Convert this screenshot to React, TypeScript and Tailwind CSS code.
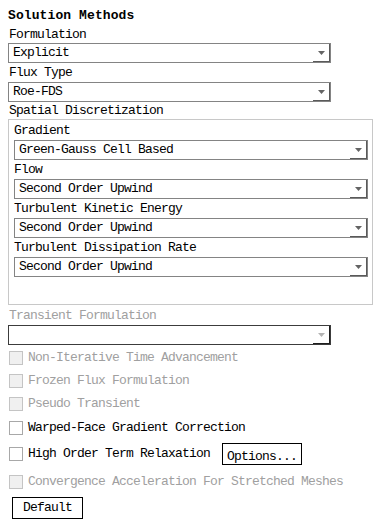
import React from 'react';

const mono = "font-['Liberation_Mono','DejaVu_Sans_Mono',monospace]";

interface DropdownProps {
  value?: string;
  width: string;
  disabled?: boolean;
}

const Dropdown = ({ value = '', width, disabled }: DropdownProps) => (
  <div
    className={`flex h-[20px] ${width} bg-white border ${
      disabled ? 'border-[#3c3c3c]' : 'border-[#848484]'
    }`}
  >
    <div className="flex-1 pl-[4px] leading-[18px] text-black whitespace-nowrap overflow-hidden">
      {value}
    </div>
    <div
      className={`w-[17px] flex items-center justify-center border-r border-b ${
        disabled ? 'border-[#1e1e1e]' : 'border-[#5a5a5a]'
      }`}
    >
      <svg width="7" height="4" viewBox="0 0 7 4">
        <path d="M0 0h7L3.5 4z" fill={disabled ? '#b4b4b4' : '#646464'} />
      </svg>
    </div>
  </div>
);

interface CheckProps {
  label: string;
  disabled?: boolean;
  className?: string;
  children?: React.ReactNode;
}

const Check = ({ label, disabled, className = '', children }: CheckProps) => (
  <div className={`flex items-center ${className}`}>
    <div
      className={`ml-[1px] w-[14px] h-[14px] border ${
        disabled ? 'border-[#c4c4c4] bg-[#f0f0f0]' : 'border-[#a8a8a8] bg-white'
      }`}
    />
    <span
      className={`ml-[5px] leading-[14px] whitespace-nowrap ${
        disabled ? 'text-[#a0a0a0]' : 'text-black'
      }`}
    >
      {label}
    </span>
    {children}
  </div>
);

const spatial = [
  { name: 'Gradient', value: 'Green-Gauss Cell Based' },
  { name: 'Flow', value: 'Second Order Upwind' },
  { name: 'Turbulent Kinetic Energy', value: 'Second Order Upwind' },
  { name: 'Turbulent Dissipation Rate', value: 'Second Order Upwind' },
];

export default function App() {
  return (
    <div
      className={`w-[382px] h-[526px] bg-white px-2 pt-[7px] text-[13px] tracking-[-0.8px] text-black ${mono}`}
    >
      <div className="h-[18px] leading-[18px] font-bold tracking-[0.1px]">Solution Methods</div>
      <div className="h-[18px] leading-[20px] pl-[1px]">Formulation</div>
      <Dropdown value="Explicit" width="w-[323px]" />
      <div className="h-[19px] leading-[20px] pl-[1px]">Flux Type</div>
      <Dropdown value="Roe-FDS" width="w-[323px]" />
      <div className="h-[17px] leading-[18px] pl-[1px]">Spatial Discretization</div>

      <div className="w-[365px] h-[186px] border border-[#c8c8c8] px-[5px] pt-px">
        {spatial.map((s) => (
          <div key={s.name}>
            <div className="h-[19px] leading-[20px]">{s.name}</div>
            <Dropdown value={s.value} width="w-[354px]" />
          </div>
        ))}
      </div>

      <div className="h-[20px] leading-[21px] pl-[1px] text-[#a0a0a0]">Transient Formulation</div>
      <Dropdown width="w-[323px]" disabled />

      <Check className="mt-[6px]" label="Non-Iterative Time Advancement" disabled />
      <Check className="mt-[9px]" label="Frozen Flux Formulation" disabled />
      <Check className="mt-[9px]" label="Pseudo Transient" disabled />
      <Check className="mt-[10px]" label="Warped-Face Gradient Correction" />
      <Check className="mt-[8px]" label="High Order Term Relaxation">
        <button className="ml-[12px] h-[22px] px-[4px] border border-black bg-white leading-[22px] pt-[2px]">
          Options...
        </button>
      </Check>
      <Check className="mt-[10px]" label="Convergence Acceleration For Stretched Meshes" disabled />

      <button className="mt-[8px] ml-[4px] w-[71px] h-[22px] border border-black bg-white leading-[20px]">
        Default
      </button>
    </div>
  );
}
